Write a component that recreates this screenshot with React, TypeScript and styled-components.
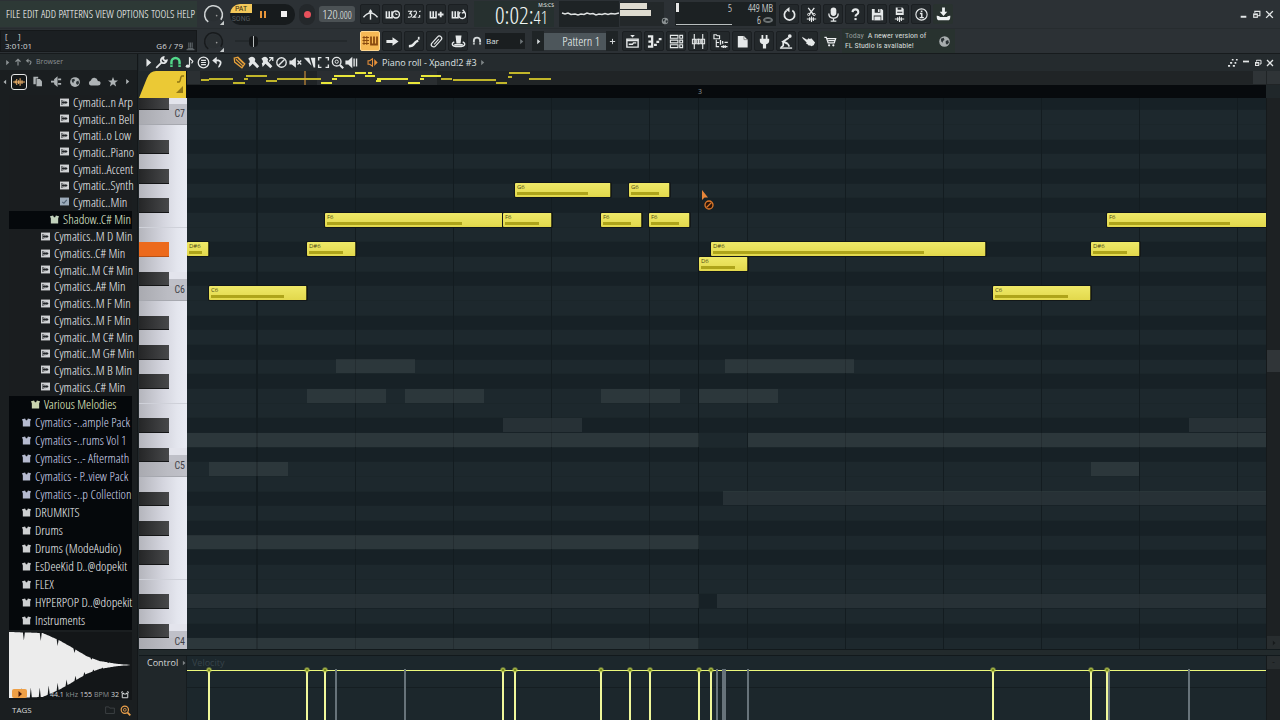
import React from "react";
import styled, { createGlobalStyle, css } from "styled-components";

const narrow = `"Roboto Condensed", Lato, sans-serif`;
const light = `"Open Sans Condensed Light", "Roboto Condensed", Lato, sans-serif`;
const sans = `"Open Sans", "Noto Sans", sans-serif`;

const Global = createGlobalStyle`
  * { box-sizing: border-box; }
  body { margin: 0; background: #1c2225; overflow: hidden; }
  button, select, input { font: inherit; color: inherit; border: 0; margin: 0; padding: 0; background: none; }
  ul { list-style: none; margin: 0; padding: 0; }
`;

/* ---------- geometry of the roll ---------- */
const OCTAVE = 176;
const TOP_SLICE = 27;
const pitchTop = (pitch: number) => TOP_SLICE + Math.floor(((95 - pitch) * OCTAVE) / 12);

type NoteData = { name?: string; pitch: number; start: number; length: number };
const D6 = 86, C6 = 84, DS6 = 87, F6 = 89, G6 = 91;

const notes: NoteData[] = [
  { name: "D#6", pitch: DS6, start: 0, length: 22 },
  { name: "C6", pitch: C6, start: 22, length: 98 },
  { name: "D#6", pitch: DS6, start: 120, length: 49 },
  { name: "F6", pitch: F6, start: 138, length: 178 },
  { name: "F6", pitch: F6, start: 316, length: 49 },
  { name: "G6", pitch: G6, start: 328, length: 96 },
  { name: "F6", pitch: F6, start: 414, length: 41 },
  { name: "G6", pitch: G6, start: 442, length: 41 },
  { name: "F6", pitch: F6, start: 462, length: 41 },
  { name: "D6", pitch: D6, start: 512, length: 49 },
  { name: "D#6", pitch: DS6, start: 524, length: 275 },
  { name: "C6", pitch: C6, start: 806, length: 98 },
  { name: "D#6", pitch: DS6, start: 904, length: 49 },
  { name: "F6", pitch: F6, start: 920, length: 160 },
];

const ghosts: NoteData[] = [
  { pitch: 79, start: 149, length: 79 },
  { pitch: 79, start: 538, length: 129 },
  { pitch: 77, start: 120, length: 79 },
  { pitch: 77, start: 218, length: 79 },
  { pitch: 77, start: 414, length: 79 },
  { pitch: 77, start: 512, length: 79 },
  { pitch: 75, start: 316, length: 79 },
  { pitch: 75, start: 1002, length: 400 },
  { pitch: 74, start: 0, length: 512 },
  { pitch: 74, start: 561, length: 900 },
  { pitch: 72, start: 22, length: 79 },
  { pitch: 72, start: 904, length: 48 },
  { pitch: 70, start: 536, length: 900 },
  { pitch: 67, start: 0, length: 512 },
  { pitch: 63, start: 0, length: 512 },
  { pitch: 63, start: 530, length: 900 },
  { pitch: 60, start: 0, length: 512 },
];

const stems = [22, 120, 138, 316, 328, 414, 443, 463, 512, 524, 806, 904, 920];
const ghostStems = [149, 218, 530, 536, 538, 561, 922, 1002];

const overview: [number, number, number][] = [
  [14, 8, 8], [22, 7, 24], [46, 11, 12], [57, 7, 4], [59, 4, 21], [79, 9, 11], [90, 7, 44],
  [134, 11, 11], [145, 7, 5], [147, 4, 21], [168, 1, 11], [178, 4, 6], [181, 1, 4], [184, 4, 4],
  [189, 9, 5], [190, 7, 31], [221, 11, 12], [233, 7, 4], [234, 4, 20], [254, 7, 11], [266, 8, 43],
  [309, 11, 11], [321, 5, 4], [322, 1, 21], [342, 7, 22],
];

/* ---------- icons, all on a 16 unit grid ---------- */
const keysSmall = <path d="M1.500 4.500v7h6v-7M4.500 4.500v7" strokeWidth="1.700" />;
const icons: Record<string, React.ReactNode> = {
  metronome: <><path d="M.5 11Q4 6.500 8 6.500t7.500 4.500" /><path d="M8 3v10.500" /><path d="M5.500 6 8 2.500 10.500 6z" fill="currentColor" stroke="none" /></>,
  waitInput: <>{keysSmall}<circle cx="11.700" cy="8" r="3.700" /><path d="M11.500 6v2h1.800" strokeWidth="1" /></>,
  countdown: <><path d="M1 4.500h4l-2 2.500q2.500 0 2 2.200t-4 1.600M7 5.300q2-2 3 0t-3.500 5.500h3.500M11.500 11h1M13 5l1.500-.8M13.500 8.500v3" strokeWidth="1.200" /></>,
  overdub: <>{keysSmall}<path d="M9.500 8h6M12.500 5v6" strokeWidth="2" /></>,
  loopRecord: <>{keysSmall}<path d="M10 5.500a3.700 3.700 0 1 0 4 0M12.500 3l2 2.500-3 1" strokeWidth="1.500" /></>,
  typing: <><path d="M.5 4.500H7M.5 7.500H7M.5 10.500H7M2 3v9M4.800 3v9" strokeWidth="1" stroke="#8a4a10" /><path d="M9 3.500v8h6v-8M12 3.500v8" strokeWidth="1.800" stroke="#8a4a10" /></>,
  arrow: <path d="M1.500 6.500H8V3.500L14.500 8 8 12.500v-3H1.500z" fill="currentColor" stroke="none" />,
  slide: <><path d="M2 13q4 0 5.500-2.500T12 7" strokeWidth="2.600" /><path d="M12.500 3v3" strokeWidth="1.800" /></>,
  link: <><rect x="1" y="5.500" width="14" height="5" rx="2.500" transform="rotate(-48 8 8)" strokeWidth="1.300" /><path d="m5.500 11 5-5.600" strokeWidth="1.100" /></>,
  hat: <><path d="M4.800 1.500h6.400l-1 8.500H5.800z" fill="currentColor" stroke="none" /><path d="M3.500 8.500q-2.500 1-2 3t6.500 2 6.500-2-2-3" strokeWidth="1.500" /><path d="M3.500 11.500h9" strokeWidth="1.800" /></>,
  magnet: <><path d="M3 13.500V7.500a5 5 0 0 1 10 0v6" strokeWidth="3" /><path d="M1.500 10.800h3M11.500 10.800h3" stroke="#20262a" strokeWidth="1" /></>,
  playlist: <><path d="M2 5.500h12v8.500H2z" /><path d="M2 7h12M4 11h4l1-1.500h3" /><path d="M5.500 1h5L8 3.800z" fill="currentColor" stroke="none" /></>,
  pianoroll: <><path d="M1 2.500h4.500v11H1M1.500 8h4" strokeWidth="2.400" /><path d="M7.500 11.500h3M10 8.500h3M12.500 5.500h3" strokeWidth="2.400" /></>,
  rack: <><path d="M1.500 1.500h8v3h-8zM1.500 6.500h8v3h-8zM1.500 11.500h8v3h-8z" strokeWidth="1.200" /><path d="M11.500 1.500h3v3h-3zM11.500 6.500h3v3h-3zM11.500 11.500h3v3h-3z" strokeWidth="1.200" /></>,
  mixer: <><path d="M3.500 0v16M12.500 0v16M8 5v6" strokeWidth="1.200" /><path d="M1.500 5.500h3.500v5H1.500zM6.300 5.500h3.400v5H6.300zM11 5.500h3.500v5H11z" strokeWidth="1.100" /></>,
  tree: <><path d="M1 .8h2.500l1 1H7V5H1zM3.500 6v7.500h3M3.500 9h3" strokeWidth="1.200" /><path d="M8 6.500v5M10.300 7.500v3M12.300 9h3.500M8.500 13.500h7M11 12v3M13 12v3" strokeWidth="1.400" /></>,
  files: <><path d="M2 1h7v2.500H5.500V12H2z" fill="currentColor" stroke="none" /><path d="M6.500 4.500h5L14.500 7.500V15h-8z" fill="currentColor" stroke="none" /></>,
  filesSolid: <><path d="M3 2h6.500L13.500 6V14.500H3z" fill="currentColor" stroke="none" /><path d="M9.500 2v4h4" stroke="#777" strokeWidth=".8" /></>,
  plug: <path d="M4.800 1v4H3v2.500q0 2.500 3.300 3.500V15.500h3.400V11Q13 10 13 7.500V5h-1.800V1H9.300v4H6.700V1z" fill="currentColor" stroke="none" />,
  person: <><circle cx="11.500" cy="2.200" r="2" fill="currentColor" stroke="none" /><path d="M10.500 4 4.500 8l5 2.500" strokeWidth="2.200" /><path d="M4.500 8v4.500L2 14.500M9.500 10.500l1.500 3" strokeWidth="1.800" /><path d="M1 15h13" strokeWidth="1.500" /></>,
  hand: <path d="M1 3 6.500 6 8 4.500l1.500.8L11 4.500 15 9l-1.500 3-2.500 1-1.500-1-1 .5L7 11l-1.500-.5.5-1.500L2 5z" fill="currentColor" stroke="none" />,
  cart: <><path d="M1.500 3.500h2l2 6h6.500l1.500-4.500H4.500M5.500 7h7" strokeWidth="1.300" /><circle cx="6.500" cy="12" r="1.200" fill="currentColor" stroke="none" /><circle cx="11" cy="12" r="1.200" fill="currentColor" stroke="none" /></>,
  refresh: <><path d="M5 3.800a5.500 5.500 0 1 0 6 0" strokeWidth="1.800" /><path d="M8 0v5.500L4.200 2.800z" fill="currentColor" stroke="none" /></>,
  cut: <><path d="m4.500 1 5.500 7M11 1 5.500 8" strokeWidth="1.400" /><circle cx="5" cy="8" r="1.200" strokeWidth="1" /><circle cx="10.800" cy="8" r="1.200" strokeWidth="1" /><path d="M3 12.800h10M6 11v4M8 10v6M10 11v4" strokeWidth="1.200" /></>,
  mic: <><rect x="5" y=".5" width="6" height="9" rx="3" fill="currentColor" stroke="none" /><path d="M3 7q0 5 5 5t5-5M8 12v2.500M5 15h6" strokeWidth="1.400" /></>,
  help: <><path d="M4.800 5.500Q5 2.500 8 2.500t3 3q0 1.500-1.500 2.300T8 10" strokeWidth="2.200" /><path d="M6.900 11.800h2.300V14H6.900z" fill="currentColor" stroke="none" /></>,
  save: <><path d="M2 2h10.500L14 3.500V14H2z" fill="currentColor" stroke="none" /><path d="M5 2h6v4H5zM4 9h8v5H4z" fill="#24292c" stroke="none" /><path d="M8.500 2.500h1.700v2.800H8.500zM4.700 10h6.600v4H4.700z" fill="currentColor" stroke="none" /></>,
  saveAs: <><path d="M4 .5h7l1.500 1.500v6.500H4z" fill="currentColor" stroke="none" /><path d="M6 .5h4v2.500H6zM5.500 5h5.500v1H5.500z" fill="#24292c" stroke="none" /><path d="M3 12.800h10M6 11v4M8 10v6M10 11v4" strokeWidth="1.200" /></>,
  info: <><circle cx="8" cy="8" r="6" strokeWidth="1.200" /><path d="M6.300 7h2v4M6 11.300h4.500" strokeWidth="1.500" /><path d="M7.200 3.800h1.800v1.600H7.200z" fill="currentColor" stroke="none" /></>,
  download: <><path d="M6.500.5h3v4.500h2.500L8 9.500 4 5h2.500z" fill="currentColor" stroke="none" /><path d="M1.500 10q0 3.500 2 3.500h9q2 0 2-3.500-2 0-2.500 1.500H4Q3.500 10 1.500 10z" fill="currentColor" /></>,
  globe: <><circle cx="8" cy="8" r="6.500" fill="currentColor" stroke="none" /><path d="M3.500 4.500 7 3.500l1 2.500-2 1.500v2L4 8zM9.500 7.500l3-1.500 1 3.500-2.500 2.500-1.500-2z" fill="#2a3134" stroke="none" /></>,
  wrench: <path d="M1.500 14.500 8.500 7.500M14.500 5.500 12 6l-2-2L10.500 1.500A4 4 0 0 0 7.500 7L9 8.500A4 4 0 0 0 14.500 5.500z" strokeWidth="2.200" />,
  note: <><path d="M8 12V1.500q.5 2.500 4 5-.5 1.500-1.500 2.500" strokeWidth="1.500" /><ellipse cx="5.900" cy="12.500" rx="2.600" ry="2" fill="currentColor" stroke="none" /></>,
  lines: <><circle cx="8" cy="8" r="6.500" strokeWidth="1.600" /><path d="M5 5.500h6M5 8h6M5 10.500h6" strokeWidth="1.500" /></>,
  undo: <><path d="M5 5.500h4q4 1 2.500 4.500T9 13.500" strokeWidth="2.200" /><path d="M7 1v9L1.500 5.500z" fill="currentColor" stroke="none" /></>,
  pencil: <><path d="M1.500 2.500 6 1.500l8.500 8L11 14.500 2 7.500z" strokeWidth="1.500" /><path d="m3.500 4 8.500 8M6 2.500l7 7" strokeWidth="1.300" /></>,
  brush: <path d="M1.500 3.500Q5-.5 9 2q2 2 .5 4.500l5.500 6-2.500 2.500L7 9.500 3 13.500 2 9q3-1.500-.5-5.500z" fill="currentColor" stroke="none" />,
  brushPlus: <><path d="M.5 3.500Q4-.5 7.500 2q2 2 .5 4l6 6.500-2.500 2.500L5.500 9.500 2 13.500 1 9q3-1.500-.5-5.500z" fill="currentColor" stroke="none" /><path d="m10 6.500 4-4.500M10 2h4.500v4" strokeWidth="1.500" /></>,
  ban: <><circle cx="8" cy="8" r="5.800" strokeWidth="1.700" /><path d="m4 12 8-8" strokeWidth="1.700" /></>,
  mute: <><path d="M.5 5.500H3.500L8.500 1.500v13L3.500 10.500H.5z" fill="currentColor" stroke="none" /><path d="m10.500 5.500 4.500 5M15 5.500 10.500 10.500" strokeWidth="1.600" /></>,
  slice: <><path d="M1 2h6.500l3 10z" fill="currentColor" stroke="none" /><path d="M9.500 2H15v12h-2z" fill="currentColor" stroke="none" /></>,
  select: <path d="M2 5.500V2h3.500M10.500 2H14v3.500M14 10.500V14h-3.500M5.500 14H2v-3.500" strokeWidth="1.700" />,
  zoom: <><circle cx="7" cy="7" r="5.300" strokeWidth="1.700" /><path d="m11 11 4 4" strokeWidth="2.600" /><circle cx="7" cy="7" r="2" strokeWidth="1.200" /></>,
  speaker: <><path d="M.5 5.500h3.500L9 1v14L4 10.500H.5z" fill="currentColor" stroke="none" /><path d="M11.200 3v10M14.200 3v10" strokeWidth="1.700" /></>,
  speakerOutline: <><path d="M1.500 5.500h2.500L8 2.500v11l-4-3H1.500z" strokeWidth="1.500" /><path d="M10.500 3 15.500 8l-5 5z" fill="currentColor" stroke="none" /></>,
  play: <path d="M5 2 12 8l-7 6z" fill="currentColor" stroke="none" />,
  back: <path d="M11 2 4 8l7 6z" fill="currentColor" stroke="none" />,
  up: <path d="M8 15V3M3 7.500 8 2.500l5 5" strokeWidth="2.400" />,
  wave: <path d="M0 8h16M3 6v4M5 4v8M7.500 5.500v5M9.500 3v10M12 5.500v5" strokeWidth="1.400" />,
  plugin: <><path d="M5 4.500 8 2v11L5 10.500z" fill="currentColor" /><path d="M0 7.500h6" strokeWidth="2.500" /><path d="M9.500 4.500h4M9.500 10.500h4" strokeWidth="2.500" /></>,
  cloud: <path d="M3.500 13a3.200 3.200 0 0 1 0-6.200Q4.500 3 8 3.500t4.200 4q3.300 0 3.300 2.700T12.200 13z" fill="currentColor" stroke="none" />,
  star: <path d="m8 0 2.200 5.500H16l-4.600 3.700L13 15 8 11.500 3 15l1.600-5.800L0 5.500h5.800z" fill="currentColor" stroke="none" />,
  sample: <><path d="M0 1h16v14H0z" fill="currentColor" stroke="none" /><path d="M3.500 3.500v9M4 8h9M7 5v6M10.500 5.500v5" stroke="#24272a" strokeWidth="1.800" /></>,
  preset: <><path d="M0 1h16v14H0z" fill="#b3c4d6" stroke="none" /><path d="m4 9 3 2 5-6" stroke="#5a6d80" strokeWidth="2" /></>,
  box: <path d="M0 2 5.500 1 7 4h2l1.500-3L16 2l-1.500 4v9h-13V6z" fill="currentColor" stroke="none" />,
  folder: <path d="M1 3h5l1.500 2H15v8.500H1z" strokeWidth="1.300" />,
  dots: <path d="M1.500 13h3M4.500 8.500h3M7 4h2.500M8.500 13h3M11 8.500h2.500M13 4h2.500" strokeWidth="2.400" />,
  minimize: <path d="M3 12h10" strokeWidth="3.500" />,
  minimizeHigh: <path d="M2 5h12" strokeWidth="3.500" />,
  restore: <><path d="M5 5V2.500h9V10h-3" strokeWidth="2" /><path d="M2 6h8.500v8H2z" fill="currentColor" stroke="none" /><path d="M4 9h4.500v3H4z" fill="#444" stroke="none" /></>,
  close: <path d="m2 2 12 12M14 2 2 14" strokeWidth="2.500" />,
  plus: <path d="M8 2v12M2 8h12" strokeWidth="2.200" />,
  stem: <path d="M1 13.500h14M3 11.500h10M5 1v9M8 1v9M11 1v9" strokeWidth="2" />,
  metro: <path d="M2.500 4H5v2h6V4h2.500v9.500h-11zM0 3l3.500-2M16 3l-3.500-2" strokeWidth="2" />,
};

const Svg = styled.svg`
  display: block;
  flex: none;
  fill: none;
  stroke: currentColor;
  stroke-width: 1.5;
`;
const Icon = ({ name, size = 14 }: { name: string; size?: number }) => (
  <Svg viewBox="0 0 16 16" width={size} height={size} aria-hidden="true">{icons[name]}</Svg>
);

/* ---------- main toolbar ---------- */
const Shell = styled.div`
  height: 100vh;
  display: flex;
  flex-direction: column;
  background: #1c2225;
  color: #d5dadb;
  font: 10px/14px ${narrow};
`;
const Header = styled.header`
  flex: none;
  background: #2c3135;
  border-bottom: 1px solid #171b1d;
`;
const HeaderRow = styled.div<{ $h: number }>`
  height: ${p => p.$h}px;
  display: flex;
  align-items: center;
  & + & { border-top: 1px solid #272c2f; }
`;
const Segment = styled.div<{ $w: number; $gap?: number; $pad?: number }>`
  flex: none;
  width: ${p => p.$w}px;
  display: flex;
  align-items: center;
  gap: ${p => p.$gap ?? 0}px;
  padding-left: ${p => p.$pad ?? 0}px;
`;
const Menu = styled.nav`
  flex: none;
  width: 197px;
  height: 26px;
  display: flex;
  align-items: center;
  justify-content: space-between;
  padding: 0 2px 0 6px;
  background: #2d3936;
  white-space: nowrap;
`;
const MenuItem = styled.button`
  font: 11px/16px ${light};
  color: #ffffff;
`;
const Hint = styled.div`
  flex: none;
  width: 197px;
  height: 22px;
  display: flex;
  align-items: flex-end;
  justify-content: space-between;
  padding: 0 1px 0 4px;
  background: #1b1f22;
  border: 1px solid #15181a;
  font: 8px/10px ${sans};
  color: #d5d8d9;
`;
const HintRight = styled.span`
  display: flex;
  align-items: center;
  gap: 3px;
  color: #d5d8d9;
  svg { color: #5a6165; }
`;
const ToolButton = styled.button<{ $tone?: "active" | "plain" | "green" }>`
  width: 20px;
  height: 20px;
  display: flex;
  align-items: center;
  justify-content: center;
  border-radius: 2px;
  background: #23282b;
  border: 1px solid #1b1f22;
  color: #e6e9ea;
  ${p => p.$tone === "active" && css`background: #f7b955; border-color: #ffd993;`}
  ${p => p.$tone === "green" && css`background: #29322f; border-color: #29322f; color: #eef1f1;`}
`;
const Transport = styled.div`
  display: flex;
  align-items: center;
  width: 65px;
  height: 21px;
  border-radius: 10px;
  overflow: hidden;
  background: #171b1d;
`;
const PatSong = styled.button`
  width: 22px;
  height: 21px;
  font: 8px/11px ${narrow};
  color: #54595c;
  span { display: block; }
  span:first-child { line-height: 9px; background: #f3c85a; color: #3b2d10; border-radius: 8px 0 0 0; }
`;
const TransportButton = styled.button`
  width: 21px;
  height: 21px;
  display: grid;
  place-items: center;
`;
const Pause = styled.span`
  width: 6px;
  height: 7px;
  border: solid #e8963a;
  border-width: 0 2px;
`;
const Stop = styled.span`
  width: 6px;
  height: 6px;
  background: #f0f0f0;
`;
const Record = styled.button`
  width: 16px;
  height: 21px;
  display: grid;
  place-items: center;
  border-radius: 8px;
  background: #24282b;
  &::before { content: ""; width: 7px; height: 7px; border-radius: 50%; background: #e8505b; }
`;
const Tempo = styled.button`
  width: 36px;
  height: 16px;
  border-radius: 3px;
  background: #4b5154;
  color: #e8ecec;
  font: 13px/16px ${light};
  small { font-size: 10px; }
`;
const TimeDisplay = styled.div`
  width: 80px;
  height: 26px;
  display: flex;
  align-items: baseline;
  justify-content: flex-end;
  padding-right: 6px;
  position: relative;
  background: #26302f;
  color: #f0f6f4;
  font: 24px/28px ${light};
  small { font-size: 18px; line-height: 20px; }
`;
const TimeUnit = styled.span`
  position: absolute;
  right: 0;
  top: 2px;
  font: 5px/5px ${sans};
`;
const Scope = styled.div`
  width: 60px;
  height: 26px;
  display: flex;
  align-items: center;
  background: #1e2325;
`;
const Meter = styled.div`
  width: 44px;
  height: 24px;
  padding-top: 1px;
  display: flex;
  flex-direction: column;
  gap: 1px;
  background: #23282a;
  i { height: 6px; background: #dedbd0; }
  i:nth-child(1) { width: 27px; }
  i:nth-child(2) { width: 31px; }
  svg { margin-left: 41px; color: #8b9193; }
`;
const Cpu = styled.div`
  width: 101px;
  height: 24px;
  display: flex;
  justify-content: space-between;
  padding: 0 3px 0 1px;
  background: #1c2123;
  color: #f0f2f2;
  font: 10px/12px ${light};
`;
const CpuGraph = styled.div`
  width: 56px;
  height: 23px;
  display: flex;
  justify-content: space-between;
  border-bottom: 1px solid #b9bebf;
  &::before { content: ""; width: 3px; height: 9px; margin-top: 1px; background: #e6e6e6; }
`;
const Memory = styled.div`
  display: flex;
  flex-direction: column;
  align-items: flex-end;
  span { display: flex; align-items: center; gap: 2px; }
  span:last-child::after { content: ""; box-sizing: border-box; width: 10px; height: 6px; border: 2px solid #6c7274; border-radius: 50%; }
`;
const Slider = styled.input`
  appearance: none;
  width: 112px;
  height: 14px;
  background: linear-gradient(#24292c, #24292c) center / 100% 2px no-repeat;
  &::-webkit-slider-thumb {
    appearance: none;
    width: 9px;
    height: 11px;
    border-radius: 4px;
    background: linear-gradient(90deg, #15181a 4px, #b9bdbe 4px 5px, #15181a 5px);
  }
`;
const SnapSelect = styled.div`
  width: 40px;
  height: 16px;
  display: flex;
  align-items: center;
  background: #1a1e20;
  color: #dfe2e3;
  svg { color: #6f7679; }
`;
const Select = styled.select`
  appearance: none;
  flex: 1;
  width: 30px;
  padding-left: 1px;
  font: 8px/14px ${sans};
`;
const PatternName = styled.button`
  width: 62px;
  height: 17px;
  padding-right: 6px;
  text-align: right;
  background: #4d565b;
  color: #f2f6f7;
  font: 13px/16px ${light};
`;
const PatternSide = styled.button`
  width: 12px;
  height: 20px;
  display: grid;
  place-items: center;
  background: #1f2426;
`;
const News = styled.div`
  flex: none;
  width: 113px;
  height: 24px;
  display: flex;
  align-items: center;
  justify-content: space-between;
  padding: 0 4px 0 3px;
  background: #28322f;
  color: #d5dbd9;
  font: 8px/10px ${narrow};
  white-space: nowrap;
  p { margin: 0; }
  span { color: #8d9795; padding-right: 2px; }
  svg { color: #a8adae; }
`;
const WindowButtons = styled.div<{ $gap: number }>`
  margin-left: auto;
  display: flex;
  align-items: center;
  gap: ${p => p.$gap}px;
  padding-right: 6px;
`;
const IconButton = styled.button<{ $c?: string }>`
  display: grid;
  place-items: center;
  color: ${p => p.$c ?? "#e3e6e7"};
`;

/* ---------- browser ---------- */
const Workspace = styled.div`
  flex: 1;
  min-height: 0;
  display: flex;
`;
const Sidebar = styled.aside`
  flex: none;
  width: 138px;
  display: flex;
  flex-direction: column;
  background: #1a1e20;
  border-right: 1px solid #131719;
`;
const SideTitle = styled.div`
  height: 16px;
  display: flex;
  align-items: center;
  gap: 3px;
  padding-left: 4px;
  background: #23292b;
  color: #8b9193;
  font: 7px/16px ${sans};
`;
const SideTabs = styled.div`
  height: 25px;
  display: flex;
  align-items: center;
  padding: 0 6px 2px 2px;
  justify-content: space-between;
  color: #aeb3b5;
`;
const Tab = styled.button<{ $on?: boolean }>`
  width: 16px;
  height: 16px;
  display: grid;
  place-items: center;
  border-radius: 3px;
  ${p => p.$on && css`border: 1px solid #e4e6e6; color: #f0b26a; background: #141718;`}
`;
const Files = styled.div`
  flex: none;
  margin: 0 5px 0 9px;
`;
const FileGroup = styled.ul<{ $h: number; $rows: number; $indent: number; $dark?: boolean }>`
  height: ${p => p.$h}px;
  display: grid;
  grid-template-rows: repeat(${p => p.$rows}, 1fr);
  padding-left: ${p => p.$indent}px;
  background: ${p => (p.$dark ? "#05080b" : "#1a1d1f")};
`;
const FileRow = styled.li<{ $c?: string }>`
  display: flex;
  align-items: center;
  gap: 4px;
  padding-bottom: 2px;
  white-space: nowrap;
  color: ${p => p.$c ?? "#f0f2f4"};
  font: 13px/14px ${light};
  svg { opacity: 0.85; }
`;
const Preview = styled.div`
  position: relative;
  flex: 1;
  min-height: 0;
  margin: 2px 5px 0 9px;
  background: #131618;
`;
const Waveform = styled.svg`
  display: block;
  width: 100%;
  height: 67px;
`;
const PreviewPlay = styled.button`
  position: absolute;
  left: 3px;
  bottom: 2px;
  width: 15px;
  height: 9px;
  display: grid;
  place-items: center;
  border-radius: 2px;
  background: #ee9f45;
  color: #4a1a0a;
`;
const PreviewInfo = styled.div`
  position: absolute;
  right: 3px;
  bottom: 0;
  display: flex;
  align-items: center;
  gap: 2px;
  white-space: nowrap;
  font: 7px/10px ${sans};
  color: #d5d8d9;
  span { color: #8d9294; }
`;
const Tags = styled.div`
  flex: none;
  height: 20px;
  display: flex;
  align-items: center;
  gap: 5px;
  padding: 0 6px 0 12px;
  font: 8px/12px ${sans};
  color: #d8dbdc;
  button:nth-of-type(1) { margin-left: auto; }
`;

/* ---------- piano roll ---------- */
const Roll = styled.main`
  flex: 1;
  min-width: 0;
  display: flex;
  flex-direction: column;
  padding-left: 1px;
  background: #20272a;
`;
const RollBar = styled.div`
  flex: none;
  height: 17px;
  display: flex;
  align-items: center;
  padding-left: 4px;
  background: #252b2e;
`;
const RollTools = styled.div<{ $pad: number }>`
  display: flex;
  gap: 1px;
  padding-right: ${p => p.$pad}px;
`;
const RollTitle = styled.h1`
  margin: 0 2px 0 4px;
  font: 9px/16px ${sans};
  color: #dfe2e3;
`;
const Top = styled.div`
  flex: none;
  height: 27px;
  display: flex;
`;
const Corner = styled.div`
  flex: none;
  width: 48px;
  border-right: 1px solid #0c1012;
  svg { display: block; }
`;
const Timeline = styled.div`
  flex: 1;
  min-width: 0;
`;
const Overview = styled.div`
  height: 14px;
  display: flex;
  background: #202426;
  overflow: hidden;
`;
const OverviewEnd = styled.div`
  margin-left: auto;
  display: flex;
  gap: 1px;
  i { width: 13px; height: 13px; background: #2f3437; }
`;
const Ruler = styled.div`
  height: 13px;
  padding-left: 511px;
  margin-right: 14px;
  background: #070a0d;
  color: #8e9496;
  font: 7px/13px ${sans};
`;
const Body = styled.div`
  flex: 1;
  min-height: 0;
  display: flex;
`;
const Column = styled.div<{ $w?: number }>`
  ${p => (p.$w ? css`flex: none; width: ${p.$w}px;` : css`flex: 1; min-width: 0;`)}
  position: relative;
  overflow: hidden;
`;
const Octave = styled.div<{ $h?: number }>`
  height: ${p => p.$h ?? OCTAVE}px;
  display: grid;
  grid-template-rows: ${p => (p.$h ? "12fr 15fr" : "repeat(12, 1fr)")};
`;
const whiteKey = "linear-gradient(90deg, #b4b5bc 0, #d4d5de 50%, #e4e6ee 80%, #e9ebf3 100%)";
const cKey = "linear-gradient(90deg, #a9aab0 0, #bbbcc3 60%, #c0c1c9 100%)";
const Key = styled.div<{ $kind: string }>`
  display: flex;
  justify-content: space-between;
  background: ${p => (p.$kind === "C" ? cKey : whiteKey)};
  ${p => p.$kind === "C" && css`border-bottom: 1px solid #a6a8af;`}
  ${p => p.$kind === "F" && css`border-bottom: 1px solid #cfd1d9;`}
  ${p => p.$kind === "C#" && css`background: linear-gradient(#e3e4ec 50%, #bfc0c8 50%);`}
`;
const BlackKey = styled.span<{ $lit?: boolean }>`
  width: 30px;
  background: ${p => (p.$lit ? "#ec6a1c" : "linear-gradient(90deg, #252627, #47484a)")};
  border-bottom: 1px solid ${p => (p.$lit ? "#b85014" : "#141516")};
`;
const KeyLabel = styled.span`
  margin-left: auto;
  padding-right: 2px;
  color: #3f4147;
  font: 10px/8px ${narrow};
`;
const Lane = styled.div<{ $black: boolean }>`
  background: ${p => (p.$black ? "#172126" : "#1d282d")};
  border-bottom: 1px solid #19242880;
`;
const Beats = styled.div`
  position: absolute;
  inset: 0;
  background:
    linear-gradient(#10191d, #10191d) 511px 0 / 1px 100% no-repeat,
    repeating-linear-gradient(90deg, #131c20 0 1px, transparent 1px 98px) 70px 0;
`;
const Note = styled.div`
  position: absolute;
  height: 14px;
  overflow: hidden;
  padding: 1px 2px;
  border-right: 1px solid #4a4a1a;
  border-radius: 1px;
  box-shadow: 0 0 0 1px #12171a;
  background: linear-gradient(#efe968, #e2d84c);
  color: #4b4916;
  font: 6px/7px ${sans};
  &::after { content: ""; display: block; width: 78%; height: 3px; margin-top: 1px; background: #aea41a; }
`;
const Ghost = styled.div`
  position: absolute;
  height: 14px;
  background: #7d8a8e28;
`;
const Cursor = styled.svg`
  position: absolute;
  left: 514px;
  top: 92px;
`;
const Scroll = styled.div`
  flex: none;
  width: 14px;
  display: flex;
  flex-direction: column;
  background: #1d2123;
  border-left: 1px solid #15191b;
`;
const Track = styled.div`
  flex: 1;
  padding-top: 252px;
`;
const Thumb = styled.i`
  display: block;
  height: 22px;
  background: #303538;
`;
const ScrollEnd = styled.button`
  height: 13px;
  background: #282d2f;
  color: #16191b;
  display: grid;
  place-items: center;
`;
const Split = styled.div`
  flex: none;
  height: 7px;
  border: solid #12191c;
  border-width: 1px 0;
  background: #222a2c;
`;
const Velocity = styled.section`
  flex: none;
  height: 64px;
  display: flex;
`;
const ControlLabel = styled.button`
  flex: none;
  width: 48px;
  display: flex;
  align-items: flex-start;
  gap: 3px;
  padding-left: 8px;
  border-right: 1px solid #161c1f;
  color: #d5d8d9;
  font: 9px/14px ${sans};
  svg { margin-top: 4px; color: #7d8385; }
`;
const VelocityLane = styled.div`
  position: relative;
  flex: 1;
  overflow: hidden;
  padding-left: 5px;
  color: #37434a;
  background:
    linear-gradient(#151e22, #151e22) 0 31px / 100% 1px no-repeat,
    #1c272c;
  font: 9px/14px ${sans};
`;
const VelocityLine = styled.div`
  position: absolute;
  left: 0;
  right: 0;
  top: 14px;
  height: 1px;
  background: #ecf87c;
`;
const Stem = styled.i<{ $ghost?: boolean }>`
  position: absolute;
  top: 13px;
  bottom: 0;
  width: 2px;
  background: ${p => (p.$ghost ? "#67737a" : "#f0f79a")};
  ${p => !p.$ghost && css`
    &::before {
      content: "";
      position: absolute;
      left: -1px;
      top: -1px;
      width: 4px;
      height: 4px;
      border-radius: 2px;
      background: radial-gradient(#7c8c20 1px, #d8e860 2px);
      outline: 1px solid #c8d85070;
    }
  `}
`;

const kinds = ["B", "A#", "A", "G#", "G", "F#", "F", "E", "D#", "D", "C#", "C"];

const KeyRow = ({ kind, octave }: { kind: string; octave: number }) => (
  <Key $kind={kind}>
    {kind.includes("#") && <BlackKey $lit={kind === "D#" && octave === 6} />}
    {kind === "C" && <KeyLabel>C{octave}</KeyLabel>}
  </Key>
);

const envelope: [number, number][] = [[0, 33], [34, 32], [50, 25], [61, 19], [78, 9], [91, 4], [110, 1], [124, 0]];
const level = (x: number) => {
  const i = Math.max(1, envelope.findIndex(([px]) => px >= x));
  const [x0, y0] = envelope[i - 1];
  const [x1, y1] = envelope[i];
  return y0 + ((y1 - y0) * (x - x0)) / (x1 - x0);
};
const wavePath = (() => {
  let top = "M0 33";
  let bottom = "";
  for (let x = 0; x <= 124; x += 1) {
    const env = level(x);
    const dipTop = x > 10 && x < 108 && (x * 7) % 17 === 3;
    const dipBottom = x > 10 && x < 100 && (x * 5) % 9 === 2;
    top += `L${x} ${(33 - (dipTop ? env * 0.75 : env)).toFixed(1)}`;
    bottom = `L${x} ${(33 + (dipBottom ? env * 0.7 : env)).toFixed(1)}` + bottom;
  }
  return top + bottom + "Z";
})();

const Knob = ({ ring }: { ring: string }) => (
  <svg viewBox="0 0 20 20" width={21} height={21}>
    <circle cx="10" cy="10" r="6.500" fill="#2a2f32" />
    <path d="M5 17a8.500 8.500 0 1 1 12-2" fill="none" stroke={ring} strokeWidth="1.500" />
    <circle cx="13" cy="11" r=".8" fill="#999" />
    <path d="M20 16v4h-4z" fill="#c6caca" />
  </svg>
);

const sampleA = ["Cymatic..n Arp", "Cymatic..n Bell", "Cymati..o Low", "Cymatic..Piano", "Cymati..Accent", "Cymatic..Synth", "Cymatic..Min"];
const sampleB = ["Cymatics..M D Min", "Cymatics..C# Min", "Cymatic..M C# Min", "Cymatics..A# Min", "Cymatics..M F Min", "Cymatics..M F Min", "Cymatic..M C# Min", "Cymatic..M G# Min", "Cymatics..M B Min", "Cymatics..C# Min"];
const packs = ["Cymatics -..ample Pack", "Cymatics -..rums Vol 1", "Cymatics -..- Aftermath", "Cymatics - P..view Pack", "Cymatics -..p Collection"];
const folders = ["DRUMKITS", "Drums", "Drums (ModeAudio)", "EsDeeKid D..@dopekit", "FLEX", "HYPERPOP D..@dopekit", "Instruments"];

const Tools = ({ names, tone }: { names: string[]; tone?: "green" }) => (
  <>{names.map(n => <ToolButton key={n} aria-label={n} $tone={tone}><Icon name={n} size={15} /></ToolButton>)}</>
);

export default function App() {
  return (
    <Shell>
      <Global />
      <Header>
        <HeaderRow $h={28}>
          <Menu>{["FILE", "EDIT", "ADD", "PATTERNS", "VIEW", "OPTIONS", "TOOLS", "HELP"].map(m => <MenuItem key={m}>{m}</MenuItem>)}</Menu>
          <Segment $w={33} $pad={6}><IconButton aria-label="Main volume"><Knob ring="#cfd3d4" /></IconButton></Segment>
          <Segment $w={130} $gap={4}>
            <Transport>
              <PatSong><span>PAT</span><span>SONG</span></PatSong>
              <TransportButton aria-label="Pause"><Pause /></TransportButton>
              <TransportButton aria-label="Stop"><Stop /></TransportButton>
            </Transport>
            <Record aria-label="Record" />
            <Tempo>120<small>.000</small></Tempo>
          </Segment>
          <Segment $w={114} $gap={2}><Tools names={["metronome", "waitInput", "countdown", "overdub", "loopRecord"]} /></Segment>
          <Segment $w={85}><TimeDisplay>0:02:<small>41</small><TimeUnit>M:S:CS</TimeUnit></TimeDisplay></Segment>
          <Segment $w={61}>
            <Scope>
              <Svg viewBox="0 0 60 10" width="60" height="10"><path d="M3 4l3 1 3-1 3 1.500 4-.5 3 1 3-1 3 .5 3-1.500 3 1 3-.5 3 1.500 3-1 3 .5 3-1 3 1 3-1 4 .5 4-1" stroke="#dfe2e2" /></Svg>
            </Scope>
          </Segment>
          <Segment $w={55}><Meter><i /><i /><Icon name="globe" size={8} /></Meter></Segment>
          <Segment $w={104}>
            <Cpu><CpuGraph>5</CpuGraph><Memory><span>449 MB</span><span>6</span></Memory></Cpu>
          </Segment>
          <Segment $w={174} $gap={2}>
            <Tools names={["refresh", "cut", "mic", "help", "save", "saveAs", "info"]} />
            <Tools names={["download"]} tone="green" />
          </Segment>
          <WindowButtons $gap={4}>
            {["minimize", "restore", "close"].map(n => <IconButton key={n} aria-label={n}><Icon name={n} size={9} /></IconButton>)}
          </WindowButtons>
        </HeaderRow>
        <HeaderRow $h={25}>
          <Hint><span>[&nbsp;&nbsp;&nbsp;&nbsp;&nbsp;]<br />3:01:01</span><HintRight>G6 / 79 <Icon name="stem" size={9} /></HintRight></Hint>
          <Segment $w={38} $pad={6}><IconButton aria-label="Main pitch"><Knob ring="#181b1d" /></IconButton></Segment>
          <Segment $w={125}><Slider type="range" aria-label="Song position" defaultValue={14} /></Segment>
          <Segment $w={111} $gap={2}>
            <ToolButton $tone="active" aria-label="Typing keyboard"><Icon name="typing" size={16} /></ToolButton>
            <Tools names={["arrow", "slide", "link", "hat"]} />
          </Segment>
          <Segment $w={61} $gap={3} $pad={1}>
            <Icon name="magnet" size={10} />
            <SnapSelect><Select aria-label="Snap"><option>Bar</option></Select><Icon name="play" size={7} /></SnapSelect>
          </Segment>
          <Segment $w={90}>
            <PatternSide aria-label="Pattern menu"><Icon name="play" size={7} /></PatternSide>
            <PatternName>Pattern 1</PatternName>
            <PatternSide aria-label="Add pattern"><Icon name="plus" size={7} /></PatternSide>
          </Segment>
          <Segment $w={220} $gap={2}>
            <Tools names={["playlist", "pianoroll", "rack", "mixer", "tree", "filesSolid", "plug", "person", "hand"]} />
            <Tools names={["cart"]} tone="green" />
          </Segment>
          <News><p><span>Today</span> A newer version of<br />FL Studio is available!</p><Icon name="globe" size={13} /></News>
        </HeaderRow>
      </Header>

      <Workspace>
        <Sidebar>
          <SideTitle><Icon name="play" size={7} /><Icon name="up" size={8} /><Icon name="undo" size={8} />Browser</SideTitle>
          <SideTabs>
            <Icon name="back" size={6} />
            <Tab $on aria-label="Samples"><Icon name="wave" size={12} /></Tab>
            <Tab aria-label="Files"><Icon name="files" size={11} /></Tab>
            <Tab aria-label="Plugins"><Icon name="plugin" size={12} /></Tab>
            <Tab aria-label="Web"><Icon name="globe" size={12} /></Tab>
            <Tab aria-label="Cloud"><Icon name="cloud" size={13} /></Tab>
            <Tab aria-label="Starred"><Icon name="star" size={10} /></Tab>
            <Icon name="play" size={7} />
          </SideTabs>
          <Files>
            <FileGroup $h={116} $rows={7} $indent={51}>
              {sampleA.map((t, i) => <FileRow key={t}><Icon name={i === 6 ? "preset" : "sample"} size={9} />{t}</FileRow>)}
            </FileGroup>
            <FileGroup $h={18} $rows={1} $indent={41} $dark>
              <FileRow $c="#e2f4da"><Icon name="box" size={9} />Shadow..C# Min</FileRow>
            </FileGroup>
            <FileGroup $h={167} $rows={10} $indent={32}>
              {sampleB.map((t, i) => <FileRow key={i}><Icon name="sample" size={9} />{t}</FileRow>)}
            </FileGroup>
            <FileGroup $h={18} $rows={1} $indent={22} $dark>
              <FileRow $c="#ecf8cc"><Icon name="box" size={9} />Various Melodies</FileRow>
            </FileGroup>
            <FileGroup $h={216} $rows={12} $indent={13} $dark>
              {packs.map(t => <FileRow key={t} $c="#d4daf2"><Icon name="box" size={9} />{t}</FileRow>)}
              {folders.map(t => <FileRow key={t}><Icon name="box" size={9} />{t}</FileRow>)}
            </FileGroup>
          </Files>
          <Preview>
            <Waveform viewBox="0 0 124 67" preserveAspectRatio="none"><path d={wavePath} fill="#ececec" /></Waveform>
            <PreviewPlay aria-label="Play preview"><Icon name="play" size={8} /></PreviewPlay>
            <PreviewInfo>44.1 <span>kHz</span> 155 <span>BPM</span> 32 <Icon name="metro" size={8} /></PreviewInfo>
          </Preview>
          <Tags>
            TAGS
            <IconButton aria-label="Folder" $c="#43484a"><Icon name="folder" size={10} /></IconButton>
            <IconButton aria-label="Search" $c="#eda24c"><Icon name="zoom" size={11} /></IconButton>
          </Tags>
        </Sidebar>

        <Roll>
          <RollBar>
            <RollTools $pad={9}>
              {["play", "wrench", "magnet", "note", "lines", "undo"].map(n => (
                <IconButton key={n} aria-label={n} $c={n === "magnet" ? "#52d88a" : undefined}><Icon name={n} size={n === "play" ? 11 : 13} /></IconButton>
              ))}
            </RollTools>
            <RollTools $pad={9}>
              {["pencil", "brush", "brushPlus", "ban", "mute", "slice", "select", "zoom", "speaker"].map(n => (
                <IconButton key={n} aria-label={n} $c={n === "pencil" ? "#e8a13a" : undefined}><Icon name={n} size={13} /></IconButton>
              ))}
            </RollTools>
            <IconButton aria-label="Preview sound" $c="#e8913a"><Icon name="speakerOutline" size={11} /></IconButton>
            <RollTitle>Piano roll - Xpand!2 #3</RollTitle>
            <IconButton aria-label="Target" $c="#7f8587"><Icon name="play" size={7} /></IconButton>
            <WindowButtons $gap={4}>
              <IconButton aria-label="Arrange"><Icon name="dots" size={11} /></IconButton>
              {["minimizeHigh", "restore", "close"].map(n => <IconButton key={n} aria-label={n}><Icon name={n} size={8} /></IconButton>)}
            </WindowButtons>
          </RollBar>
          <Top>
            <Corner>
              <svg width="47" height="27" viewBox="0 0 47 27">
                <path d="M0 27 8 7Q11 0 17 0H47V27z" fill="#ebc935" />
                <path d="M38 11h2q1 0 1.500-3T43 5h2" fill="none" stroke="#8f7412" strokeWidth="1.500" />
                <path d="M37 22h7v-7z" fill="#927816" />
              </svg>
            </Corner>
            <Timeline>
              <Overview>
                <svg width="400" height="14">
                  <path d="M0 0h13v13H0z" fill="#2b3033" />
                  <path d="M130 0h120v14H130z" fill="#2a2e31" />
                  {overview.map(([x, y, w]) => <rect key={x} x={x} y={y} width={w} height="2" fill={x > 130 && x < 250 ? "#e8e63a" : "#c2b62a"} />)}
                  <path d="M118 0v14" stroke="#e8a03a" />
                </svg>
                <OverviewEnd><i /><i /></OverviewEnd>
              </Overview>
              <Ruler>3</Ruler>
            </Timeline>
          </Top>
          <Body>
            <Column $w={48}>
              <Octave $h={TOP_SLICE}><KeyRow kind="C#" octave={7} /><KeyRow kind="C" octave={7} /></Octave>
              {[6, 5, 4].map(o => <Octave key={o}>{kinds.map(k => <KeyRow key={k} kind={k} octave={o} />)}</Octave>)}
            </Column>
            <Column>
              <Octave $h={TOP_SLICE}><Lane $black /><Lane $black={false} /></Octave>
              {[6, 5, 4].map(o => <Octave key={o}>{kinds.map(k => <Lane key={k} $black={k.includes("#")} />)}</Octave>)}
              <Beats />
              {ghosts.map((n, i) => <Ghost key={i} style={{ left: n.start, top: pitchTop(n.pitch), width: n.length }} />)}
              {notes.map((n, i) => <Note key={i} style={{ left: n.start, top: pitchTop(n.pitch), width: n.length }}>{n.name}</Note>)}
              <Cursor width="16" height="20" viewBox="0 0 16 20">
                <path d="M1 0v10l2.500-2.500H7z" fill="#e8863a" />
                <circle cx="8" cy="15" r="4" fill="#2a1408" stroke="#e07a2c" strokeWidth="1.300" />
                <path d="m5.500 17.500 5-5" stroke="#e07a2c" strokeWidth="1.300" />
              </Cursor>
            </Column>
            <Scroll>
              <Track><Thumb /></Track>
              <ScrollEnd aria-label="Scroll down"><Icon name="play" size={6} /></ScrollEnd>
            </Scroll>
          </Body>
          <Split />
          <Velocity>
            <ControlLabel>Control <Icon name="play" size={6} /></ControlLabel>
            <VelocityLane>
              Velocity
              <VelocityLine />
              {ghostStems.map(x => <Stem key={x} $ghost style={{ left: x - 1 }} />)}
              {stems.map(x => <Stem key={x} style={{ left: x - 1 }} />)}
            </VelocityLane>
            <Scroll><ScrollEnd aria-label="Lane options">-</ScrollEnd></Scroll>
          </Velocity>
        </Roll>
      </Workspace>
    </Shell>
  );
}
